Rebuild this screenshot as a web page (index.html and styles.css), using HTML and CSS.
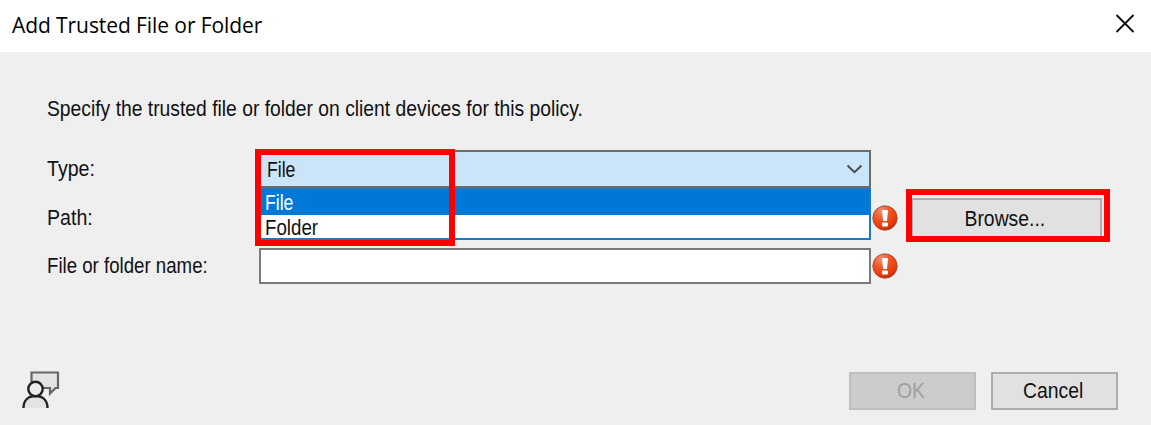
FILE: index.html
```html
<!DOCTYPE html>
<html lang="en">
<head>
<meta charset="utf-8">
<title>Add Trusted File or Folder</title>
<link rel="stylesheet" href="styles.css">
</head>
<body>
<div class="dialog">
  <header class="titlebar">
    <span class="title">Add Trusted File or Folder</span>
    <svg class="close" width="20" height="20" viewBox="0 0 20 20"><path d="M1.500 1 18.500 18M18.500 1 1.500 18" fill="none" stroke="#111" stroke-width="1.900"/></svg>
  </header>
  <main class="content">
    <p class="intro"><span class="intro-text">Specify the trusted file or folder on client devices for this policy.</span></p>
    <div class="form">
      <div class="row row-type">
        <span class="label label-type">Type:</span>
        <div class="combo">
          <span class="value current">File</span>
          <svg class="chevron" width="17" height="10" viewBox="0 0 17 10"><path d="M1.500 1.500 8.500 8.300 15.500 1.500" fill="none" stroke="#454b50" stroke-width="1.900"/></svg>
          <div class="list">
            <div class="option selected"><span class="value">File</span></div>
            <div class="option"><span class="value folder">Folder</span></div>
          </div>
          <div class="callout callout-type"></div>
        </div>
      </div>
      <div class="row">
        <span class="label label-path">Path:</span>
        <div class="field"></div>
        <svg class="error" width="26" height="26" viewBox="0 0 26 26">
          <defs><radialGradient id="red" cx=".35" cy=".2" r=".85"><stop offset="0" stop-color="#f78a68"/><stop offset=".5" stop-color="#ee4d20"/><stop offset=".8" stop-color="#e83a0b"/><stop offset="1" stop-color="#a63218"/></radialGradient></defs>
          <circle cx="13" cy="13" r="12.200" fill="url(#red)" stroke="#a24b39" stroke-width=".9"/>
          <path d="M10 5h6l-1 11h-4z" fill="#fff"/><rect x="10" y="17.500" width="6" height="4" rx="1" fill="#fff"/>
        </svg>
        <div class="browse"><span class="text browse-text">Browse...</span><div class="callout callout-browse"></div></div>
      </div>
      <div class="row">
        <span class="label label-name">File or folder name:</span>
        <div class="field"></div>
        <svg class="error" width="26" height="26" viewBox="0 0 26 26">
          <circle cx="13" cy="13" r="12.200" fill="url(#red)" stroke="#a24b39" stroke-width=".9"/>
          <path d="M10 5h6l-1 11h-4z" fill="#fff"/><rect x="10" y="17.500" width="6" height="4" rx="1" fill="#fff"/>
        </svg>
      </div>
    </div>
  </main>
  <footer class="footer">
    <svg class="feedback" width="38" height="40" viewBox="0 0 38 40">
      <path d="M9.500 12V2.500H36V18H33.500L28 23.500V18H20" fill="#e3e3e3" stroke="#666" stroke-width="2.200"/>
      <path d="M1.500 38C1.500 29.500 7 26 13.500 26S25.500 29.500 25.500 38" fill="#e3e3e3" stroke="#222" stroke-width="2.400"/>
      <circle cx="13.500" cy="19" r="7.200" fill="#ededed" stroke="#222" stroke-width="2.400"/>
    </svg>
    <div class="button disabled"><span class="text ok">OK</span></div>
    <div class="button"><span class="text cancel">Cancel</span></div>
  </footer>
</div>
</body>
</html>
```
FILE: styles.css
```css
* { box-sizing: border-box; }
body { margin: 0; }
.dialog {
  width: 1151px;
  height: 425px;
  display: flex;
  flex-direction: column;
  background: #efefef;
  color: #111;
  font: 22px/26px "Liberation Sans", Arial, sans-serif;
  overflow: hidden;
}
.titlebar {
  height: 52px;
  padding: 0 16px 5px 12px;
  display: flex;
  align-items: center;
  justify-content: space-between;
  background: #fff;
}
.title {
  padding-top: 2px;
  font: 21px/28px "Open Sans", "Noto Sans", sans-serif;
  letter-spacing: -0.08px;
  color: #000;
}
.content { flex: 1; padding: 44px 0 0 47px; }
.intro { margin: 0; height: 26px; white-space: nowrap; }
.intro-text, .label, .value, .text { display: inline-block; transform-origin: left center; white-space: nowrap; }
.intro-text { transform: scaleX(.877); }
.form { display: flex; flex-direction: column; gap: 12px; padding-top: 28px; }
.row {
  height: 36px;
  display: grid;
  grid-template-columns: 212px 612px 26px 190px;
  grid-template-rows: 36px;
  align-items: center;
}
.row-type { height: 38px; grid-template-rows: 38px; }
.label, .value { justify-self: start; }
.label-type, .label-path { transform: scaleX(.89); }
.label-name { transform: scaleX(.848); }
.value { transform: scaleX(.8); }
.folder { transform: scaleX(.85); }
.current { padding-top: 1px; }
.combo {
  position: relative;
  height: 38px;
  display: flex;
  align-items: center;
  justify-content: space-between;
  padding: 0 6px;
  border: 2px solid #6b6b6b;
  background: #cce4f7;
}
.list {
  position: absolute;
  left: -2px;
  top: 36px;
  width: 612px;
  height: 52px;
  border: 2px solid #1a78c8;
  background: #fff;
  z-index: 1;
}
.option { height: 25px; padding-left: 4px; display: flex; align-items: center; }
.option.selected { background: #0078d7; color: #fff; }
.field { height: 36px; border: 2px solid #7a7a7a; background: #fff; }
.error { display: block; margin-left: 1px; }
.browse, .button {
  display: flex;
  align-items: center;
  justify-content: center;
  height: 38px;
  border: 2px solid #adadad;
  background: #e1e1e1;
}
.browse { position: relative; margin-left: 14px; width: 191px; height: 40px; padding-top: 1px; }
.text { transform: scaleX(.88); transform-origin: center; }
.browse-text { margin-right: 4px; }
.callout { position: absolute; border: 6px solid #f00; z-index: 2; }
.callout-type { left: -6px; top: -3px; width: 200px; height: 97px; }
.callout-browse { left: -7px; top: -11px; width: 204px; height: 53px; }
.footer {
  display: flex;
  align-items: center;
  gap: 15px;
  padding: 0 33px 15px 22px;
}
.feedback { margin-right: auto; }
.button { margin-top: 1px; padding: 1px 3px 0 0; width: 127px; }
.disabled { background: #ccc; border-color: #bfbfbf; color: #a0a0a0; }
```
